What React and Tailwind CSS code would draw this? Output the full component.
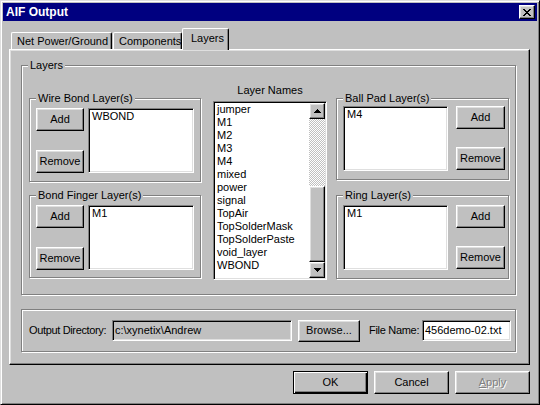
import React from 'react'

const sunken =
  'border border-t-[#808080] border-l-[#808080] border-r-white border-b-white shadow-[inset_1px_1px_0_#000,inset_-1px_-1px_0_#dfdfdf]'
const raised =
  'border border-t-white border-l-white border-r-black border-b-black shadow-[inset_-1px_-1px_0_#808080,inset_1px_1px_0_#dfdfdf]'

const layerNames = [
  'jumper',
  'M1',
  'M2',
  'M3',
  'M4',
  'mixed',
  'power',
  'signal',
  'TopAir',
  'TopSolderMask',
  'TopSolderPaste',
  'void_layer',
  'WBOND',
]

function Btn({ children, className = '', isDefault, disabled }) {
  const frame = isDefault
    ? 'border border-black shadow-[inset_1px_1px_0_#fff,inset_-1px_-1px_0_#000,inset_-2px_-2px_0_#808080]'
    : raised
  return (
    <button
      type="button"
      className={`flex items-center justify-center whitespace-nowrap bg-[#c0c0c0] leading-[13px] ${frame} ${
        disabled ? 'text-[#808080] [text-shadow:1px_1px_0_#fff]' : 'text-black'
      } ${className}`}
    >
      {children}
    </button>
  )
}

function Group({ label, className = '', children }) {
  return (
    <div
      className={`relative border border-[#808080] shadow-[inset_1px_1px_0_#fff,1px_1px_0_#fff] ${className}`}
    >
      {label && (
        <span className="absolute -top-[7px] left-[6px] whitespace-nowrap bg-[#c0c0c0] px-[2px] leading-[13px]">
          {label}
        </span>
      )}
      {children}
    </div>
  )
}

function ListBox({ items, className = '' }) {
  return (
    <div className={`bg-white pl-[3px] pt-[1px] ${sunken} ${className}`}>
      {items.map((it) => (
        <div key={it} className="leading-[13px]">
          {it}
        </div>
      ))}
    </div>
  )
}

function LayerPicker({ label, item, className = '' }) {
  return (
    <Group label={label} className={className}>
      <div className="flex items-start pl-[6px] pt-[9px]">
        <div className="flex h-[65px] flex-col justify-between">
          <Btn className="h-[23px] w-[48px]">Add</Btn>
          <Btn className="h-[23px] w-[48px]">Remove</Btn>
        </div>
        <ListBox items={[item]} className="ml-[4px] h-[65px] w-[106px]" />
      </div>
    </Group>
  )
}

function Arrow({ up }) {
  return (
    <div className={`flex h-[16px] w-[16px] items-center justify-center bg-[#c0c0c0] ${raised}`}>
      <svg width="7" height="4" viewBox="0 0 7 4" shapeRendering="crispEdges">
        {up ? (
          <path d="M3 0h1v1h1v1h1v1h1v1H0V3h1V2h1V1h1z" fill="#000" />
        ) : (
          <path d="M0 0h7v1H6v1H5v1H4v1H3V3H2V2H1V1H0z" fill="#000" />
        )}
      </svg>
    </div>
  )
}

function LayerNames() {
  return (
    <div className="flex w-[114px] flex-col items-center">
      <div className="leading-[13px]">Layer Names</div>
      <div className={`mt-[4px] flex h-[179px] w-[114px] bg-white ${sunken}`}>
        <div className="flex-1 pl-[3px] pt-[1px]">
          {layerNames.map((n) => (
            <div key={n} className="leading-[13px]">
              {n}
            </div>
          ))}
        </div>
        <div className="mr-[1px] flex w-[16px] flex-col py-[1px]">
          <Arrow up />
          <div className="h-[67px] bg-[repeating-conic-gradient(#c0c0c0_0_25%,#fff_0_50%)] bg-[length:2px_2px]" />
          <div className={`flex-1 bg-[#c0c0c0] ${raised}`} />
          <Arrow />
        </div>
      </div>
    </div>
  )
}

function SidePicker({ label, item, className = '', top }) {
  return (
    <Group label={label} className={className}>
      <div className={`flex items-start pl-[6px] ${top}`}>
        <ListBox items={[item]} className="h-[65px] w-[105px]" />
        <div className="ml-[8px] flex h-[64px] flex-col justify-between">
          <Btn className="h-[23px] w-[49px]">Add</Btn>
          <Btn className="h-[23px] w-[49px]">Remove</Btn>
        </div>
      </div>
    </Group>
  )
}

export default function App() {
  return (
    <div className="h-[405px] w-[540px] bg-[#c0c0c0] font-['Liberation_Sans',Arial,sans-serif] text-[11px] text-black">
      <div className="flex h-full w-full flex-col border border-t-[#dfdfdf] border-l-[#dfdfdf] border-r-black border-b-black p-[2px] shadow-[inset_1px_1px_0_#fff,inset_-1px_-1px_0_#808080]">
        {/* title bar */}
        <div className="flex h-[18px] items-center justify-between bg-[#000080] pl-[3px] pr-[2px]">
          <span className="text-[12px] font-bold text-white">AIF Output</span>
          <div className={`flex h-[14px] w-[16px] items-center justify-center bg-[#c0c0c0] ${raised}`}>
            <svg width="8" height="7" viewBox="0 0 8 7" shapeRendering="crispEdges">
              <path
                d="M0 0h2v1h1v1h2V1h1V0h2v1H7v1H6v1H5v1h1v1h1v1h1v1H6V6H5V5H3v1H2v1H0V6h1V5h1V4h1V3H2V2H1V1H0z"
                fill="#000"
              />
            </svg>
          </div>
        </div>

        {/* tabs */}
        <div className="ml-[6px] mt-[7px] flex h-[21px] items-end whitespace-nowrap">
          <div className="ml-[2px] flex h-[17px] w-[101px] items-start rounded-t-[2px] border border-b-0 border-t-white border-l-white border-r-black pl-[5px] pt-[2px] leading-[13px] shadow-[inset_-1px_0_0_#808080]">
            Net Power/Ground
          </div>
          <div className="ml-[1px] flex h-[17px] w-[69px] items-start rounded-t-[2px] border border-b-0 border-t-white border-l-white border-r-black pl-[5px] pt-[2px] leading-[13px] shadow-[inset_-1px_0_0_#808080]">
            Components
          </div>
          <div className="relative z-10 -mb-[1px] flex h-[22px] w-[47px] items-start rounded-t-[2px] border border-b-0 border-t-white border-l-white border-r-black bg-[#c0c0c0] pl-[8px] pt-[3px] leading-[13px] shadow-[inset_-1px_0_0_#808080]">
            Layers
          </div>
        </div>

        {/* tab panel */}
        <div className={`ml-[6px] h-[316px] w-[521px] pl-[11px] pt-[15px] ${raised}`}>
          <Group label="Layers" className="h-[230px] w-[495px]">
            <div className="flex items-start pl-[7px] pt-[18px]">
              <div className="mt-[14px] flex w-[172px] flex-col">
                <LayerPicker label="Wire Bond Layer(s)" item="WBOND" className="h-[84px]" />
                <LayerPicker label="Bond Finger Layer(s)" item="M1" className="mt-[13px] h-[83px]" />
              </div>
              <div className="ml-[12px]">
                <LayerNames />
              </div>
              <div className="ml-[9px] mt-[14px] flex w-[173px] flex-col">
                <SidePicker label="Ball Pad Layer(s)" item="M4" top="pt-[7px]" className="h-[82px]" />
                <SidePicker label="Ring Layer(s)" item="M1" top="pt-[9px]" className="mt-[15px] h-[84px]" />
              </div>
            </div>
          </Group>

          <Group className="mt-[14px] flex h-[43px] w-[495px] items-center whitespace-nowrap pl-[7px]">
            <span className="w-[83px] tracking-[-0.35px] leading-[13px]">Output Directory:</span>
            <div className={`flex h-[21px] w-[180px] items-center bg-[#c0c0c0] pl-[2px] ${sunken}`}>
              c:\xynetix\Andrew
            </div>
            <Btn className="ml-[6px] h-[22px] w-[62px]">Browse...</Btn>
            <span className="ml-[9px] w-[53px] tracking-[-0.3px] leading-[13px]">File Name:</span>
            <div className={`flex h-[21px] w-[89px] items-center bg-white pl-[2px] ${sunken}`}>
              456demo-02.txt
            </div>
          </Group>
        </div>

        {/* dialog buttons */}
        <div className="ml-[6px] mt-[6px] flex w-[521px] justify-end gap-[6px]">
          <Btn isDefault className="h-[23px] w-[75px]">
            OK
          </Btn>
          <Btn className="h-[23px] w-[75px]">Cancel</Btn>
          <Btn disabled className="h-[23px] w-[75px]">
            <span>
              <span className="underline">A</span>pply
            </span>
          </Btn>
        </div>
      </div>
    </div>
  )
}
